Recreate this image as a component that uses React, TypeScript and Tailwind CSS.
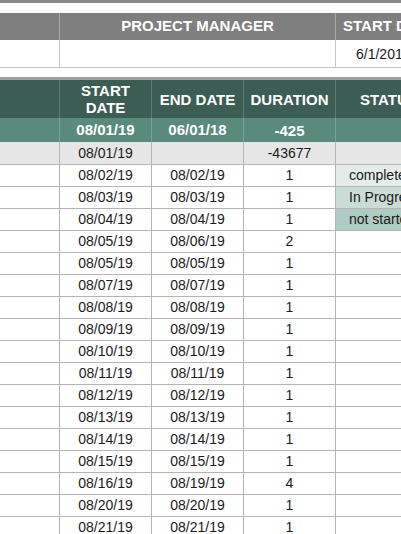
import React from "react";

type Row = { start: string; end: string; dur: string; status?: string; statusBg?: string };

const rows: Row[] = [
  { start: "08/02/19", end: "08/02/19", dur: "1", status: "completed", statusBg: "bg-[#e3ecea]" },
  { start: "08/03/19", end: "08/03/19", dur: "1", status: "In Progress", statusBg: "bg-[#c9dcd6]" },
  { start: "08/04/19", end: "08/04/19", dur: "1", status: "not started", statusBg: "bg-[#afccc4]" },
  { start: "08/05/19", end: "08/06/19", dur: "2" },
  { start: "08/05/19", end: "08/05/19", dur: "1" },
  { start: "08/07/19", end: "08/07/19", dur: "1" },
  { start: "08/08/19", end: "08/08/19", dur: "1" },
  { start: "08/09/19", end: "08/09/19", dur: "1" },
  { start: "08/10/19", end: "08/10/19", dur: "1" },
  { start: "08/11/19", end: "08/11/19", dur: "1" },
  { start: "08/12/19", end: "08/12/19", dur: "1" },
  { start: "08/13/19", end: "08/13/19", dur: "1" },
  { start: "08/14/19", end: "08/14/19", dur: "1" },
  { start: "08/15/19", end: "08/15/19", dur: "1" },
  { start: "08/16/19", end: "08/19/19", dur: "4" },
  { start: "08/20/19", end: "08/20/19", dur: "1" },
  { start: "08/21/19", end: "08/21/19", dur: "1" },
];

const cols = "grid grid-cols-[60px_92px_92px_92px_120px]";

export default function App() {
  return (
    <div className="w-[401px] h-[534px] overflow-hidden bg-white text-[#1a1a1a] font-['Liberation_Sans',Arial,sans-serif] text-[14px]">
      {/* top strip */}
      <div className="h-[3px] bg-[#8a8a8a]" />
      <div className="h-[10px]" />

      {/* project manager block */}
      <div className="grid grid-cols-[60px_276px_120px] h-[27px] bg-[#7f7f7f] text-white font-bold text-[15px]">
        <div className="border-r border-[#a8a8a8]" />
        <div className="border-r border-[#a8a8a8] flex items-center justify-center">PROJECT MANAGER</div>
        <div className="flex items-center pl-[7px] whitespace-nowrap">START DATE</div>
      </div>
      <div className="grid grid-cols-[60px_276px_120px] h-[28px] border-b border-[#c4c4c4]">
        <div className="border-r border-[#c4c4c4]" />
        <div className="border-r border-[#c4c4c4]" />
        <div className="flex items-center pl-[20px] pt-[1px] whitespace-nowrap">6/1/2019</div>
      </div>
      <div className="h-[9px]" />
      <div className="h-[3px] bg-[#a0a0a0]" />

      {/* table header */}
      <div className={`${cols} h-[38px] bg-[#3b5d54] text-white font-bold text-[15px] leading-[17px]`}>
        <div className="border-r border-[#5b7a72]" />
        <div className="border-r border-[#5b7a72] flex items-center justify-center text-center">
          START
          <br />
          DATE
        </div>
        <div className="border-r border-[#5b7a72] flex items-center justify-center">END DATE</div>
        <div className="border-r border-[#5b7a72] flex items-center justify-center">DURATION</div>
        <div className="flex items-center pl-[24px] whitespace-nowrap">STATUS</div>
      </div>

      {/* summary row */}
      <div className={`${cols} h-[24px] bg-[#5a8a7c] text-white font-bold text-[15px]`}>
        <div className="border-r border-[#7a9f94]" />
        <div className="border-r border-[#7a9f94] flex items-center justify-center">08/01/19</div>
        <div className="border-r border-[#7a9f94] flex items-center justify-center">06/01/18</div>
        <div className="border-r border-[#7a9f94] flex items-center justify-center pt-[2px]">-425</div>
        <div />
      </div>

      {/* totals row */}
      <div className={`${cols} h-[23px] bg-[#e6e6e6] border-b border-[#b4b4b4]`}>
        <div className="border-r border-[#b4b4b4]" />
        <div className="border-r border-[#b4b4b4] flex items-center justify-center">08/01/19</div>
        <div className="border-r border-[#b4b4b4]" />
        <div className="border-r border-[#b4b4b4] flex items-center justify-center">-43677</div>
        <div />
      </div>

      {rows.map((r, i) => (
        <div key={i} className={`${cols} h-[22px] border-b border-[#b4b4b4]`}>
          <div className="border-r border-[#b4b4b4]" />
          <div className="border-r border-[#b4b4b4] flex items-center justify-center">{r.start}</div>
          <div className="border-r border-[#b4b4b4] flex items-center justify-center">{r.end}</div>
          <div className="border-r border-[#b4b4b4] flex items-center justify-center">{r.dur}</div>
          <div className={`flex items-center pl-[13px] whitespace-nowrap ${r.statusBg ?? ""}`}>{r.status}</div>
        </div>
      ))}
    </div>
  );
}
